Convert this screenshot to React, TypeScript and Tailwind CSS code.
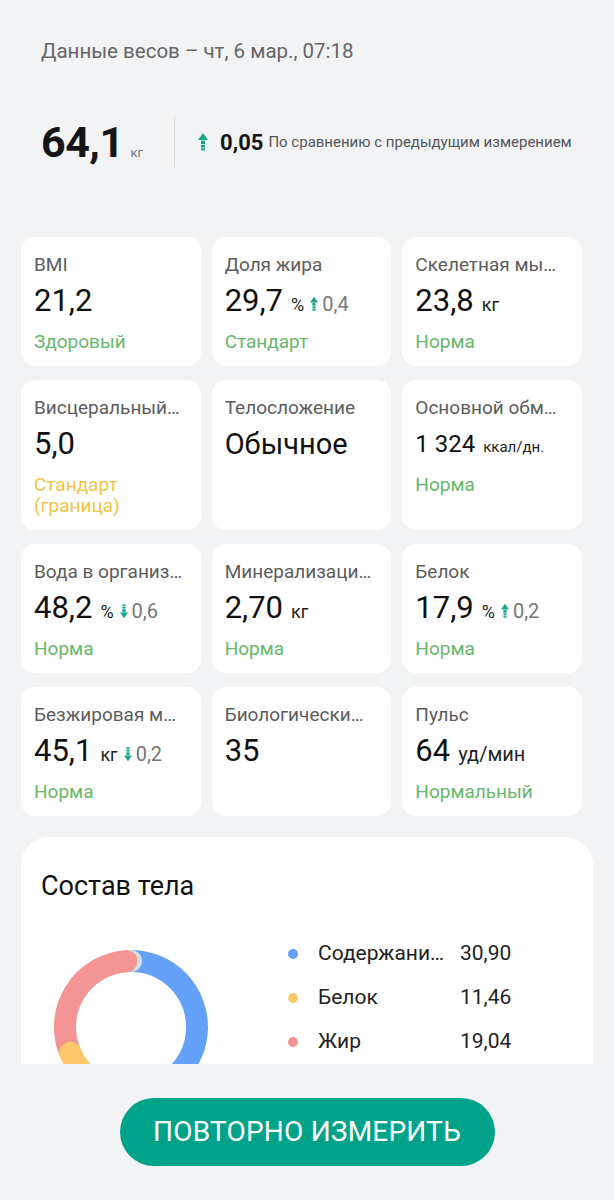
import clsx from 'clsx';

type Metric = {
  label: string;
  value: string;
  unit?: string;
  unitClass?: string;
  valueClass?: string;
  delta?: { dir: 'up' | 'down'; value: string };
  status?: string;
  statusTone?: 'green' | 'yellow';
};

const METRICS: Metric[] = [
  { label: 'BMI', value: '21,2', status: 'Здоровый', statusTone: 'green' },
  { label: 'Доля жира', value: '29,7', unit: '%', delta: { dir: 'up', value: '0,4' }, status: 'Стандарт', statusTone: 'green' },
  { label: 'Скелетная мышечная масса', value: '23,8', unit: 'кг', status: 'Норма', statusTone: 'green' },
  { label: 'Висцеральный жир', value: '5,0', status: 'Стандарт (граница)', statusTone: 'yellow' },
  { label: 'Телосложение', value: 'Обычное', valueClass: 'text-[29px]' },
  { label: 'Основной обмен веществ', value: '1 324', valueClass: 'text-[24px]', unit: 'ккал/дн.', unitClass: 'text-[15px]', status: 'Норма', statusTone: 'green' },
  { label: 'Вода в организме', value: '48,2', unit: '%', delta: { dir: 'down', value: '0,6' }, status: 'Норма', statusTone: 'green' },
  { label: 'Минерализация костей', value: '2,70', unit: 'кг', status: 'Норма', statusTone: 'green' },
  { label: 'Белок', value: '17,9', unit: '%', delta: { dir: 'up', value: '0,2' }, status: 'Норма', statusTone: 'green' },
  { label: 'Безжировая масса тела', value: '45,1', unit: 'кг', delta: { dir: 'down', value: '0,2' }, status: 'Норма', statusTone: 'green' },
  { label: 'Биологический возраст', value: '35' },
  { label: 'Пульс', value: '64', unit: 'уд/мин', unitClass: 'text-[20px]', status: 'Нормальный', statusTone: 'green' },
];

const LEGEND = [
  { label: 'Содержание воды', value: '30,90', color: 'bg-[#64a2fa]' },
  { label: 'Белок', value: '11,46', color: 'bg-[#fbc86a]' },
  { label: 'Жир', value: '19,04', color: 'bg-[#f59494]' },
  { label: 'Минерализация костей', value: '2,70', color: 'bg-[#cfe2de]' },
];

function Arrow({ down = false, className }: { down?: boolean; className?: string }) {
  return (
    <svg viewBox="0 0 10 18" className={clsx(className, down && 'rotate-180')} fill="#18a68a">
      <path d="M5 0 L10 7 H0 Z" />
      <rect x="3" y="7.6" width="4" height="3.6" />
      <rect x="3" y="12" width="4" height="2.6" />
      <rect x="3" y="15.4" width="4" height="2" />
    </svg>
  );
}

// angles are degrees clockwise from 12 o'clock
const arc = (cx: number, cy: number, r: number, from: number, to: number) => {
  const pt = (a: number) => {
    const rad = (a * Math.PI) / 180;
    return [cx + r * Math.sin(rad), cy - r * Math.cos(rad)];
  };
  const [x1, y1] = pt(from);
  const [x2, y2] = pt(to);
  const large = to - from > 180 ? 1 : 0;
  return `M${x1.toFixed(2)} ${y1.toFixed(2)} A${r} ${r} 0 ${large} 1 ${x2.toFixed(2)} ${y2.toFixed(2)}`;
};

function Donut() {
  const segs = [
    { from: 0, to: 183, color: '#64a2fa' },
    { from: -15, to: 0, color: '#cfe2de' },
    { from: 247, to: 356, color: '#f59494' },
    { from: 183, to: 247, color: '#fbc86a' },
  ];
  return (
    <svg width="180" height="180" viewBox="0 0 180 180" className="shrink-0">
      {segs.map((s, i) => (
        <path key={i} d={arc(90, 90, 66, s.from, s.to)} stroke={s.color} strokeWidth="22" strokeLinecap="round" fill="none" />
      ))}
    </svg>
  );
}

function MetricCard({ m }: { m: Metric }) {
  return (
    <div className="bg-white rounded-[14px] pl-[13px] pr-[18px] pt-4 pb-[14px] min-w-0">
      <div className="text-[19px] leading-6 text-[#5c5c5c] truncate">{m.label}</div>
      <div className="mt-1.5 h-9 flex items-baseline whitespace-nowrap">
        <span className={clsx('text-[#111] leading-9', m.valueClass ?? 'text-[31px]')}>{m.value}</span>
        {m.unit && <span className={clsx('ml-2 text-[#222]', m.unitClass ?? 'text-[18px]')}>{m.unit}</span>}
        {m.delta && (
          <>
            <Arrow down={m.delta.dir === 'down'} className="ml-1.5 w-[8px] h-[16px] self-center mt-1.5" />
            <span className="ml-1 text-[20px] text-[#777]">{m.delta.value}</span>
          </>
        )}
      </div>
      {m.status && (
        <div
          className={clsx(
            'mt-3 text-[19px] leading-[21px] w-[120px]',
            m.statusTone === 'yellow' ? 'text-[#f1c548]' : 'text-[#67b86a]'
          )}
        >
          {m.status}
        </div>
      )}
    </div>
  );
}

export default function App() {
  return (
    <div className="w-[614px] h-[1200px] bg-[#f1f3f5] flex flex-col overflow-hidden" style={{ fontFamily: 'Roboto, "Noto Sans", sans-serif' }}>
      <div className="h-[1064px] overflow-hidden shrink-0 pt-[38px]">
        <div className="pl-[41px] text-[20.5px] leading-[26px] text-[#666]">Данные весов – чт, 6 мар., 07:18</div>

        <div className="mt-[53px] pl-[41px] flex items-center">
          <div className="flex items-baseline">
            <span className="text-[43px] font-bold leading-none text-[#151515] tracking-[-0.5px]">64,1</span>
            <span className="ml-[7px] text-[13px] text-[#777]">кг</span>
          </div>
          <div className="ml-[31px] w-px h-[50px] bg-[#dcdcdc]" />
          <Arrow className="ml-[23px] w-[10px] h-[18px]" />
          <span className="ml-[12px] text-[22px] font-bold text-[#151515]">0,05</span>
          <span className="ml-[5px] text-[15px] text-[#555] whitespace-nowrap">По сравнению с предыдущим измерением</span>
        </div>

        <div className="mt-[70px] pl-[21px] pr-[32px] grid grid-cols-3 gap-x-[11px] gap-y-[14px]">
          {METRICS.map(m => (
            <MetricCard key={m.label} m={m} />
          ))}
        </div>

        <div className="mt-[21px] mx-[21px] h-[300px] bg-white rounded-[28px] px-5 pt-[34px]">
          <div className="text-[27px] leading-[30px] text-[#111]">Состав тела</div>
          <div className="mt-[31px] flex items-start">
            <div className="mt-[5px]">
              <Donut />
            </div>
            <div className="ml-[67px] flex flex-col">
              {LEGEND.map(l => (
                <div key={l.label} className="h-[44px] flex items-center">
                  <span className={clsx('w-[10px] h-[10px] rounded-full shrink-0', l.color)} />
                  <span className="ml-[20px] w-[130px] truncate text-[21px] text-[#222]">{l.label}</span>
                  <span className="ml-3 text-[21px] text-[#222]">{l.value}</span>
                </div>
              ))}
            </div>
          </div>
        </div>
      </div>

      <div className="flex-1 flex items-start justify-center pt-[34px]">
        <button className="w-[375px] h-[68px] rounded-full bg-[#00a38a] text-white text-[28px] tracking-[0.2px]">
          ПОВТОРНО ИЗМЕРИТЬ
        </button>
      </div>
    </div>
  );
}
